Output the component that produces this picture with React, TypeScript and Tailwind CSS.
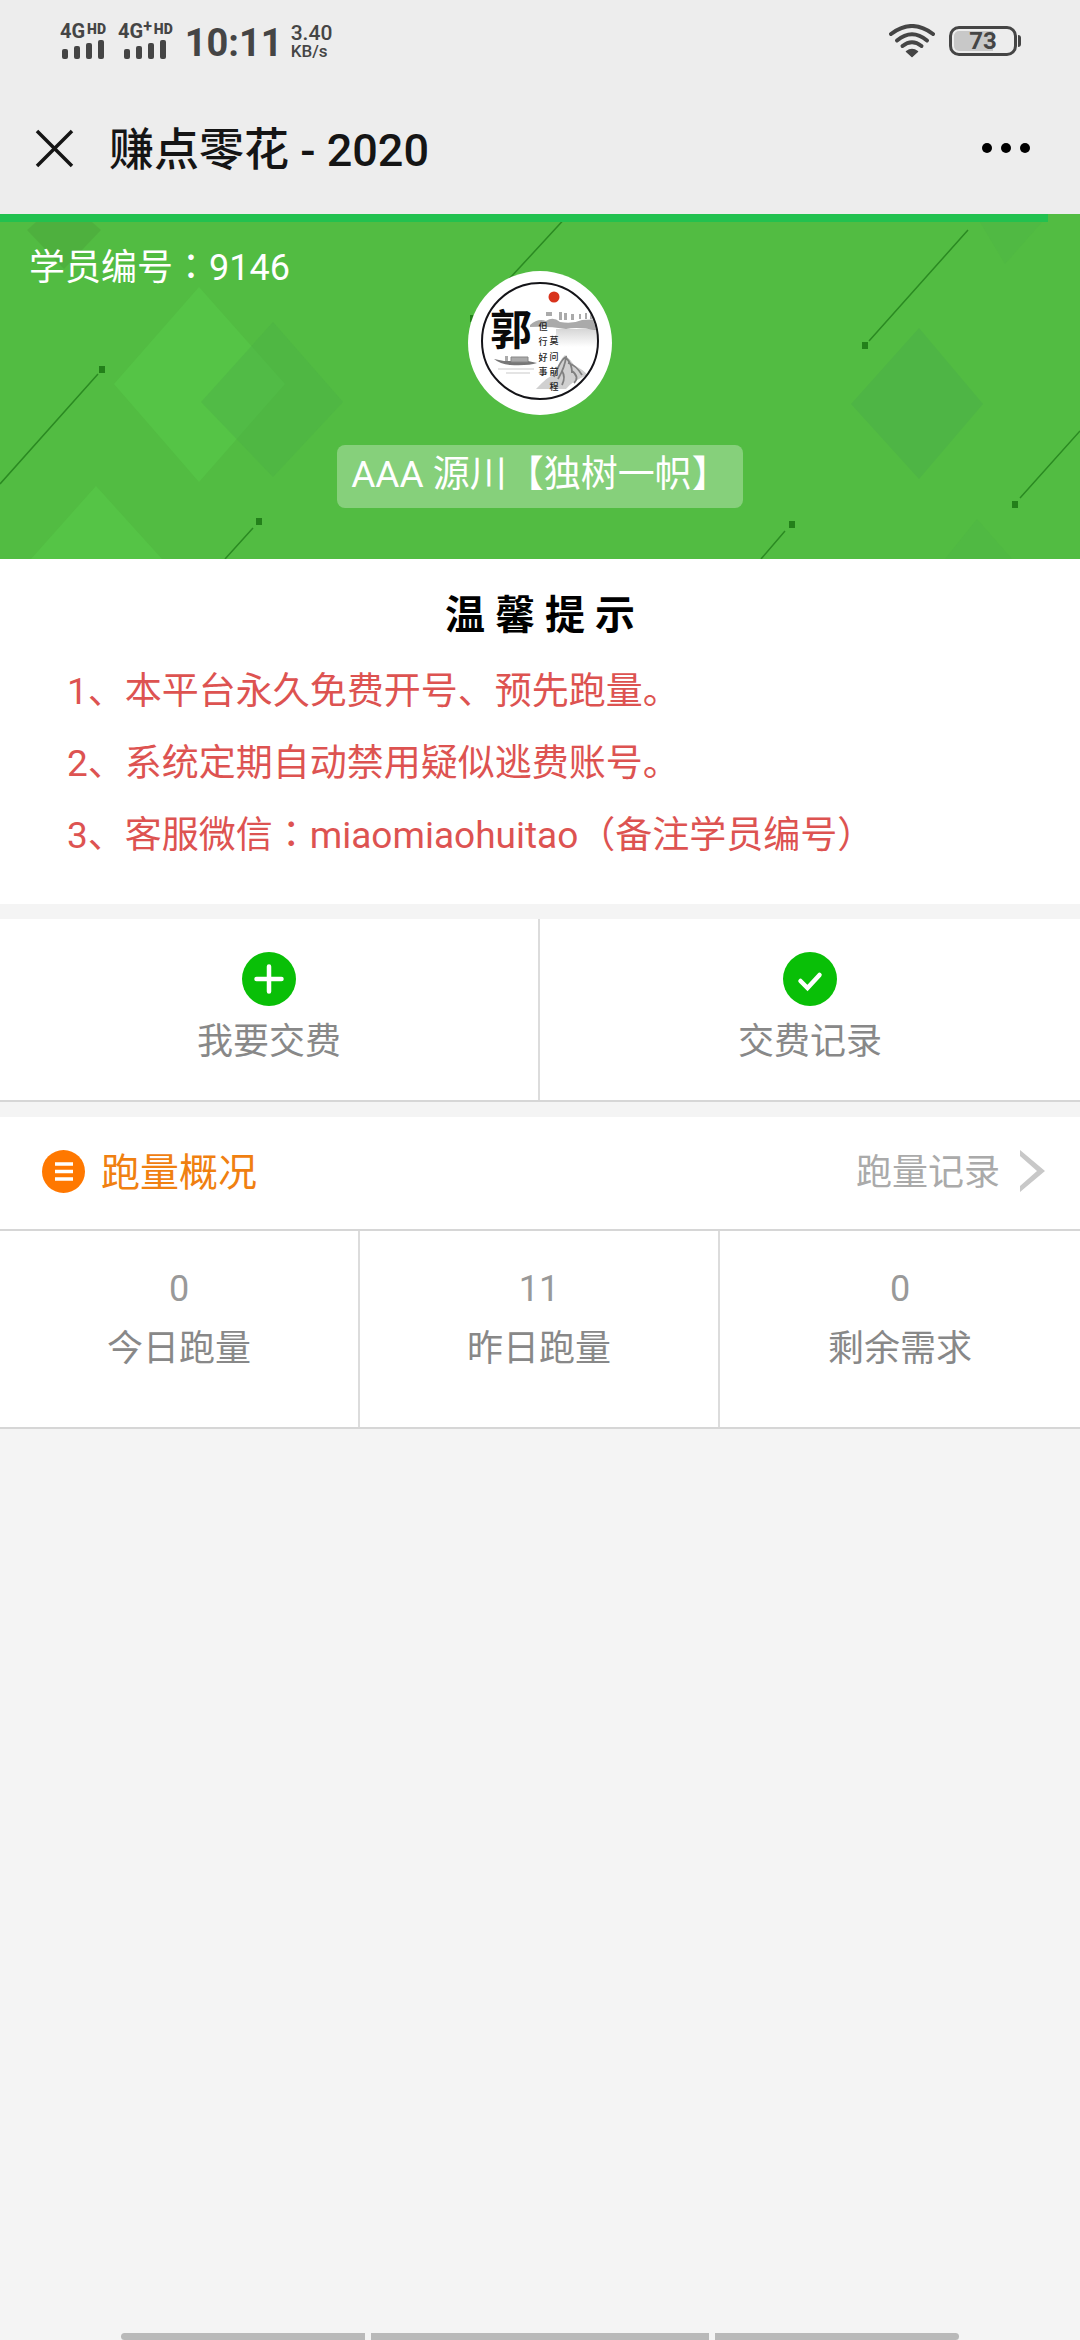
import React from 'react';

function Colon() {
  return (
    <span lang="zh-TW" className='font-["Roboto","Noto_Sans_CJK_TC",sans-serif]'>
      ：
    </span>
  );
}

function Signal({ plus = false }: { plus?: boolean }) {
  return (
    <div className="flex flex-col gap-px">
      <div className="flex items-start font-bold">
        <span className="text-[20px] leading-4">4G</span>
        {plus && <span className="text-[16px] leading-2">+</span>}
        <span className="pl-0.5 text-[14px] leading-3 font-black">HD</span>
      </div>
      <svg viewBox="0 0 46 19" className={plus ? 'ml-1 h-[19px] w-[46px]' : 'h-[19px] w-[46px]'} fill="currentColor" aria-hidden="true">
        <rect x="2" y="9" width="6" height="10" rx="2" />
        <rect x="14" y="6" width="6" height="13" rx="2" />
        <rect x="26" y="3" width="6" height="16" rx="2" />
        <rect x="38" y="0" width="6" height="19" rx="2" />
      </svg>
    </div>
  );
}

function StatusBar() {
  return (
    <div className="flex h-[82px] items-center justify-between pr-[59px] pl-[60px] text-[#454545]">
      <div className="flex items-center">
        <Signal />
        <div className="pl-3">
          <Signal plus />
        </div>
        <span className="pt-1 pl-3 text-[38px] leading-10 font-bold">10:11</span>
        <div className="flex flex-col pl-2 font-medium">
          <span className="text-[21px] leading-5">3.40</span>
          <span className="text-[17px] leading-4">KB/s</span>
        </div>
      </div>
      <div className="flex items-center gap-[14px]">
        <svg viewBox="0 0 46 34" className="h-[34px] w-[46px]" fill="none" stroke="currentColor" strokeWidth="4" strokeLinecap="round" aria-label="Wi-Fi">
          <path d="M2 10 Q23 -6 44 10" />
          <path d="M8 16.500 Q23 4 38 16.500" />
          <path d="M13.500 22 Q23 14.500 32.500 22" />
          <path d="M17.500 27.500 Q23 23.500 28.500 27.500 L23 32.500Z" fill="currentColor" strokeWidth="1.500" strokeLinejoin="round" />
        </svg>
        <div className="flex items-center gap-px">
          <div className="flex h-[30px] w-[68px] items-center justify-center rounded-[10px] border-3 border-current bg-[linear-gradient(90deg,#c8c8c8_68%,transparent_68%)] bg-origin-content bg-clip-content p-0.5 text-[24px] leading-none font-bold">
            73
          </div>
          <div className="h-3 w-[3px] rounded-r-sm bg-current" />
        </div>
      </div>
    </div>
  );
}

function NavBar() {
  return (
    <div className="flex h-[132px] items-center pr-[50px] pl-[35px]">
      <button type="button" aria-label="关闭" className="flex">
        <svg viewBox="0 0 39 39" className="size-[39px]" stroke="#151515" strokeWidth="3.500" aria-hidden="true">
          <path d="M2 2 L37 37 M37 2 L2 37" />
        </svg>
      </button>
      <h1 className="flex-1 pt-[6px] pl-[35px] text-[45px] leading-[60px] font-medium text-[#151515]">赚点零花 - 2020</h1>
      <button type="button" aria-label="更多" className="flex gap-[9px]">
        <span className="size-[10px] rounded-full bg-black" />
        <span className="size-[10px] rounded-full bg-black" />
        <span className="size-[10px] rounded-full bg-black" />
      </button>
    </div>
  );
}

function HeroPattern() {
  return (
    <svg viewBox="0 0 1080 345" preserveAspectRatio="xMidYMid slice" className="absolute inset-0 h-full w-full" aria-hidden="true">
      <path d="M199 73 L285 170 L199 268 L114 170Z M96 272 L162 345 H31Z" fill="#55c446" />
      <path d="M273 108 L343 188 L273 263 L201 188Z" fill="#4aae47" opacity=".4" />
      <path d="M919 114 L983 190 L919 265 L851 190Z" fill="#4aae47" opacity=".5" />
      <path d="M45 0 H83 L101 16 L64 55 L27 16Z" fill="#4ca93c" opacity=".6" />
      <path d="M977 305 L1012 345 H945Z M980 8 H1042 L1005 50Z" fill="#4cb246" opacity=".3" />
      <g stroke="#2b8a22" strokeWidth="1.500">
        <path d="M98 160 L0 270 M253 314 L225 345 M569 0 L475 102 M968 16 L869 127 M1080 217 L1020 284 M785 317 L761 345" />
      </g>
      <g fill="#23801a">
        <rect x="99" y="152" width="6" height="7" />
        <rect x="256" y="304" width="6" height="7" />
        <rect x="470" y="101" width="6" height="7" />
        <rect x="862" y="128" width="6" height="7" />
        <rect x="1012" y="287" width="6" height="7" />
        <rect x="789" y="307" width="6" height="7" />
      </g>
    </svg>
  );
}

function Avatar() {
  return (
    <svg viewBox="0 0 144 144" className="size-36" role="img" aria-label="郭">
      <defs>
        <clipPath id="disc">
          <circle cx="72" cy="70" r="57" />
        </clipPath>
        <linearGradient id="mist" x1="0" y1="0" x2="0" y2="1">
          <stop offset="0" stopColor="#777" />
          <stop offset="1" stopColor="#fff" />
        </linearGradient>
      </defs>
      <circle cx="72" cy="72" r="72" fill="#fff" />
      <g clipPath="url(#disc)">
        <path d="M62 54 Q70 47 78 50 Q85 45 92 51 Q105 53 114 49 L132 48 V60 Q110 55 98 58 Q80 55 62 56Z" fill="#aaa" />
        <path d="M88 58 H130 V76 H88Z" fill="url(#mist)" opacity=".3" />
        <path d="M91 49 v-8 h3 v8z M96 49 v-7 h3 v7z M103 49 v-6 h3 v6z M111 48 v-5 h2 v5z M117 48 v-6 h2 v6z M122 48 v-5 h3 v5z M78 45 v-4 h6 v4z" fill="#aaa" />
        <path d="M68 118 Q80 105 86 104 Q92 88 97 84 Q102 88 106 94 Q114 98 120 104 Q104 110 98 118Z" fill="#d0d0d0" />
        <path d="M86 106 Q93 88 98 86 Q97 96 90 108 M98 87 Q104 92 104 102 M100 92 Q108 94 114 104 M94 100 Q98 106 94 114 M104 100 Q112 106 106 112" fill="none" stroke="#808080" strokeWidth="1.800" />
        <path d="M26 88 L36 90 H60 L69 92 Q60 95 42 94 Q32 93 26 88Z" fill="#777" />
        <path d="M43 91 V86 H60 V91Z" fill="#aaa" stroke="#888" />
        <path d="M37 90 v-5 h3 v5z" fill="#aaa" />
        <path d="M30 98 H66 M38 102 H62" stroke="#e4e4e4" strokeWidth="2" />
        <text x="22" y="74" fontSize="42" fontWeight="700" fill="#0a0a0a">郭</text>
        <g fontSize="9" fontWeight="500" fill="#222" textAnchor="middle">
          <text x="75" y="59">但</text>
          <text x="75" y="74">行</text>
          <text x="75" y="90">好</text>
          <text x="75" y="104">事</text>
          <text x="86" y="73">莫</text>
          <text x="86" y="89">问</text>
          <text x="86" y="104">前</text>
          <text x="86" y="119">程</text>
        </g>
        <circle cx="86" cy="26" r="5.500" fill="#d8331c" />
      </g>
      <circle cx="72" cy="70" r="58" fill="none" stroke="#141418" strokeWidth="2" />
    </svg>
  );
}

function Hero() {
  return (
    <section className="relative h-[345px] overflow-hidden bg-[#52bc42] text-white">
      <HeroPattern />
      <div className="absolute inset-x-0 top-0 h-2">
        <div className="h-full w-[97%] bg-[#22c14f]" role="progressbar" aria-label="页面加载" aria-valuenow={97} />
      </div>
      <p className="absolute top-[30px] left-[29px] text-[36px] leading-12">
        学员编号<Colon />9146
      </p>
      <div className="relative flex flex-col items-center gap-[30px] pt-[57px]">
        <Avatar />
        <p className="rounded-lg bg-white/30 px-[14px] pt-[6px] pb-[9px] text-[37px] leading-12">AAA 源川【独树一帜】</p>
      </div>
    </section>
  );
}

function Notice() {
  return (
    <section className="bg-white px-[67px] pt-[27px] pb-8">
      <h2 className="text-center text-[40px] leading-[60px] font-bold text-black">温 馨 提 示</h2>
      <div className="pt-[10px] text-[37px] leading-[72px] text-[#dd5351]">
        <p>1、本平台永久免费开号、预先跑量。</p>
        <p>2、系统定期自动禁用疑似逃费账号。</p>
        <p>
          3、客服微信<Colon />miaomiaohuitao（备注学员编号）
        </p>
      </div>
    </section>
  );
}

function Actions() {
  return (
    <nav className="mt-[15px] grid grid-cols-2 border-b-2 border-[#d6d6d6] bg-white text-[36px] leading-12 text-[#888]">
      <a href="#pay" className="flex flex-col items-center gap-3 border-r-2 border-[#dcdcdc] pt-[33px] pb-[34px]">
        <svg viewBox="0 0 54 54" className="size-[54px]" aria-hidden="true">
          <circle cx="27" cy="27" r="27" fill="#09bf07" />
          <path d="M27 14.500 V39.500 M14.500 27 H39.500" stroke="#fff" strokeWidth="4.500" strokeLinecap="round" />
        </svg>
        我要交费
      </a>
      <a href="#payments" className="flex flex-col items-center gap-3 pt-[33px] pb-[34px]">
        <svg viewBox="0 0 54 54" className="size-[54px]" aria-hidden="true">
          <circle cx="27" cy="27" r="27" fill="#09bf07" />
          <path d="M17.500 29 L24.500 36 L36.500 23" fill="none" stroke="#fff" strokeWidth="4.500" strokeLinecap="round" />
        </svg>
        交费记录
      </a>
    </nav>
  );
}

const stats = [
  { label: '今日跑量', value: 0 },
  { label: '昨日跑量', value: 11 },
  { label: '剩余需求', value: 0 },
];

function Overview() {
  return (
    <section className="mt-[15px] bg-white">
      <div className="flex h-[114px] items-center justify-between border-b-2 border-[#d6d6d6] pr-[35px] pb-1 pl-[42px]">
        <h2 className="flex items-center gap-4 text-[39px] leading-12 text-[#f08010]">
          <svg viewBox="0 0 43 43" className="size-[43px]" aria-hidden="true">
            <circle cx="21.500" cy="21.500" r="21.500" fill="#ff7800" />
            <path d="M13 14 H31 M13 21.500 H31 M13 29 H31" stroke="#fff" strokeWidth="3.500" />
          </svg>
          <span className="pt-1">跑量概况</span>
        </h2>
        <a href="#records" className="flex items-center gap-5 text-[36px] leading-12 text-[#aaa]">
          <span className="pt-1">跑量记录</span>
          <svg viewBox="0 0 25 42" className="h-[42px] w-[25px]" aria-hidden="true">
            <path d="M0 0 L25 21 L0 42 V36 L17 21 L0 6Z" fill="#c8c8c8" />
          </svg>
        </a>
      </div>
      <dl className="grid grid-cols-3 divide-x-2 divide-[#dcdcdc] border-b-2 border-[#d6d6d6] text-center text-[36px]">
        {stats.map((s) => (
          <div key={s.label} className="flex flex-col-reverse pt-7 pb-12 leading-[60px]">
            <dt className="text-[#888]">{s.label}</dt>
            <dd className="text-[#999]">{s.value}</dd>
          </div>
        ))}
      </dl>
    </section>
  );
}

function GestureBar() {
  return (
    <div className="mx-[121px] mt-auto flex h-[7px] gap-[6px]">
      <div className="flex-[244] rounded-l-sm bg-[#b9b9b9]" />
      <div className="flex-[338] bg-[#b9b9b9]" />
      <div className="flex-[244] rounded-r-sm bg-[#b9b9b9]" />
    </div>
  );
}

export default function App() {
  return (
    <div className='flex min-h-screen flex-col bg-[#f4f4f4] font-["Roboto","Noto_Sans_CJK_SC",sans-serif]' lang="zh-CN">
      <header className="bg-[#ededed]">
        <StatusBar />
        <NavBar />
      </header>
      <main>
        <Hero />
        <Notice />
        <Actions />
        <Overview />
      </main>
      <GestureBar />
    </div>
  );
}
